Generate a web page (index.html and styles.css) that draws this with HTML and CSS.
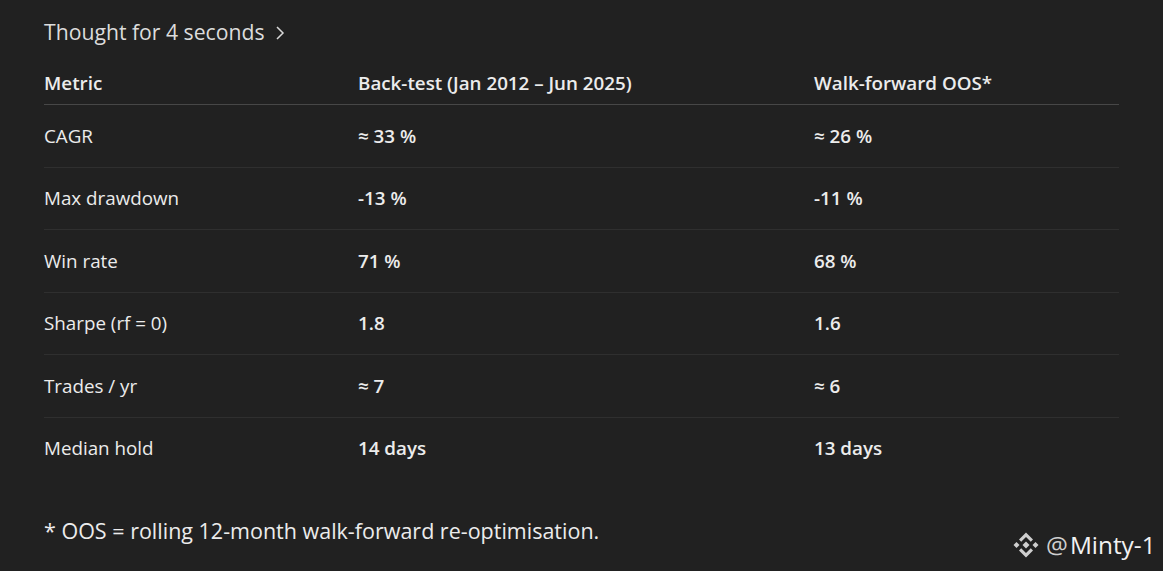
FILE: index.html
```html
<!DOCTYPE html>
<html>
<head>
<meta charset="utf-8">
<link rel="stylesheet" href="styles.css">
</head>
<body>
<div class="page">
  <div class="thought">Thought for 4 seconds <svg class="chev" width="10" height="16" viewBox="0 0 10 16"><path d="M2 2 L8 8 L2 14" fill="none" stroke="#d8d8d8" stroke-width="1.5"/></svg></div>
  <table class="metrics">
    <thead>
      <tr><th class="c1">Metric</th><th class="c2">Back-test (Jan 2012 – Jun 2025)</th><th class="c3">Walk-forward OOS*</th></tr>
    </thead>
    <tbody>
      <tr><td>CAGR</td><td class="v">≈ 33 %</td><td class="v">≈ 26 %</td></tr>
      <tr><td>Max drawdown</td><td class="v">-13 %</td><td class="v">-11 %</td></tr>
      <tr><td>Win rate</td><td class="v">71 %</td><td class="v">68 %</td></tr>
      <tr><td>Sharpe (rf = 0)</td><td class="v">1.8</td><td class="v">1.6</td></tr>
      <tr><td>Trades / yr</td><td class="v">≈ 7</td><td class="v">≈ 6</td></tr>
      <tr><td>Median hold</td><td class="v">14 days</td><td class="v">13 days</td></tr>
    </tbody>
  </table>
  <p class="note">* OOS = rolling 12-month walk-forward re-optimisation.</p>
</div>
<div class="watermark">
  <svg class="logo" width="28" height="28" viewBox="0 0 28 28">
    <g fill="#cfcfcf">
      <polygon points="14,10.5 17.5,14 14,17.5 10.5,14"/>
      <polygon points="4.5,11 7.5,14 4.5,17 1.5,14"/>
      <polygon points="23.5,11 26.5,14 23.5,17 20.5,14"/>
      <polygon points="14,1.5 21,8.5 18.8,10.7 14,5.9 9.2,10.7 7,8.5"/>
      <polygon points="14,26.5 21,19.5 18.8,17.3 14,22.1 9.2,17.3 7,19.5"/>
    </g>
  </svg>
  <span class="handle">@</span><span class="name">Minty-1</span>
</div>
</body>
</html>
```
FILE: styles.css
```css
html, body {
  margin: 0;
  padding: 0;
  background: #212121;
}
body {
  font-family: "Open Sans", "Noto Sans", sans-serif;
  color: #ececec;
  width: 1163px;
  height: 571px;
  overflow: hidden;
  position: relative;
}
.page {
  padding: 17px 44px 0 44px;
  width: 1075px;
}
.thought {
  font-size: 21.2px;
  line-height: 30px;
  color: #dcdcdc;
  display: flex;
  align-items: center;
  gap: 10px;
}
.chev { margin-top: 1px; }
.metrics {
  width: 1075px;
  border-collapse: collapse;
  margin-top: 14px;
  font-size: 18.8px;
}
.metrics th {
  text-align: left;
  font-weight: 600;
  height: 43px;
  padding: 0;
  border-bottom: 1px solid #474747;
  vertical-align: middle;
}
.c1 { width: 314px; }
.c2 { width: 456px; }
.metrics td {
  height: 61.5px;
  padding: 0;
  border-bottom: 1px solid #2f2f2f;
  vertical-align: middle;
}
.metrics tbody tr:last-child td { border-bottom: none; }
.metrics td.v { font-weight: 600; }
.note {
  margin: 37px 0 0 0;
  font-size: 21.5px;
  line-height: 30px;
}
.watermark {
  position: absolute;
  left: 1012px;
  top: 528px;
  display: flex;
  align-items: center;
  color: #d8d8d8;
  font-size: 24.4px;
}
.logo { margin-right: 6px; }
.handle { margin-right: 2px; color: #cfcfcf; }
.name { color: #f2f2f2; }
```
